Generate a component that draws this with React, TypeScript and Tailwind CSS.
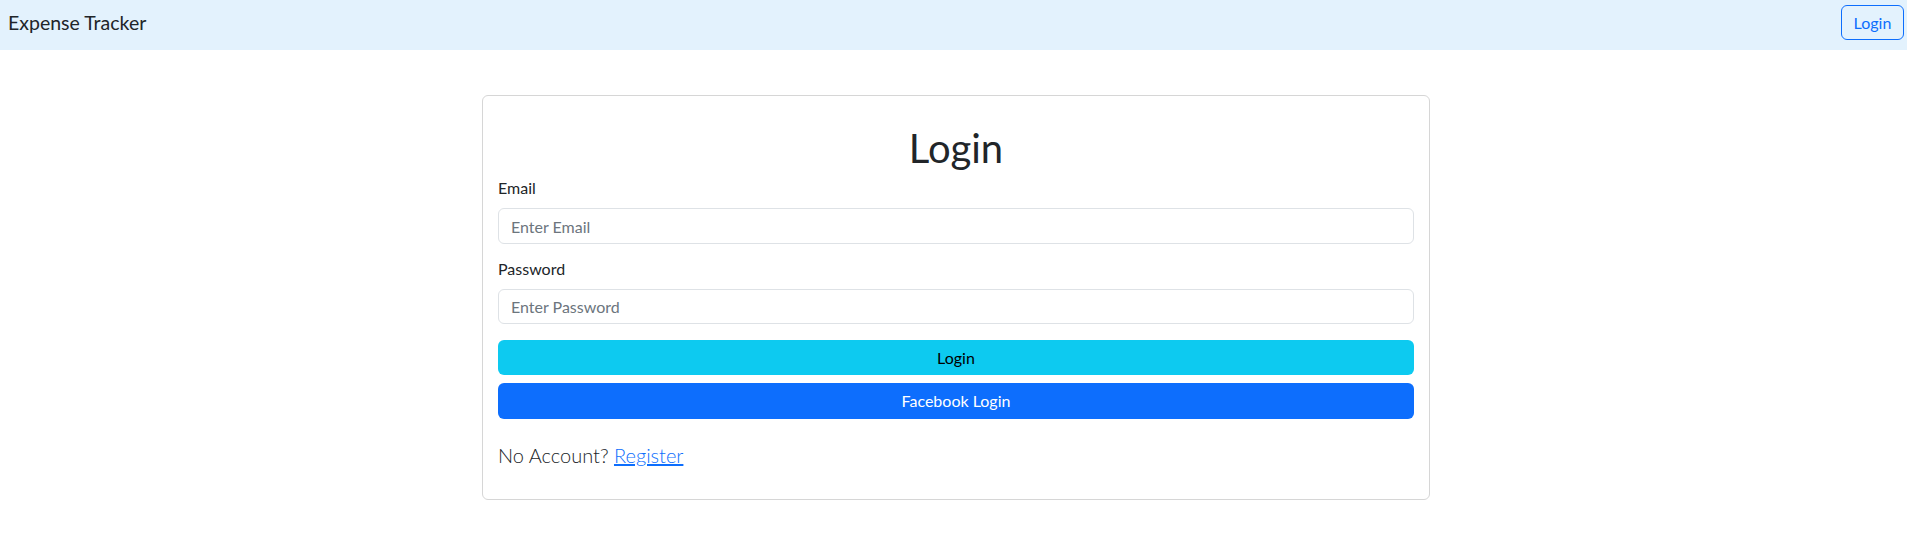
export default function App() {
  return (
    <div className="min-h-screen bg-white text-[#212529] [font-family:Lato,'Liberation_Sans',sans-serif]">
      {/* navbar */}
      <nav className="flex h-[50px] items-start justify-between bg-[#e3f2fd] pl-2 pr-[3px] pt-[5px]">
        <a className="flex h-[35px] items-center text-[19.5px] leading-none text-[#212529]">Expense Tracker</a>
        <button className="h-[35px] w-[63px] rounded-md border border-[#0d6efd] text-[16px] text-[#0d6efd]">
          Login
        </button>
      </nav>

      <div className="pl-[5px]">
        <div className="mx-auto mt-[45px] w-[948px] rounded-md border border-[#d6d6d6] px-[15px] pb-[29px] pt-[28px]">
          <h1 className="text-center text-[40px] leading-[48px] text-[#212529]">Login</h1>

          <form className="mt-[4px] flex flex-col">
            <label className="mb-[8px] text-[16px] leading-6">Email</label>
            <input
              type="email"
              placeholder="Enter Email"
              className="h-[36px] rounded-md border border-[#dee2e6] px-3 text-[16px] placeholder:text-[#6c757d] focus:outline-none"
            />
            <label className="mb-[8px] mt-[13px] text-[16px] leading-6">Password</label>
            <input
              type="password"
              placeholder="Enter Password"
              className="h-[35px] rounded-md border border-[#dee2e6] px-3 text-[16px] placeholder:text-[#6c757d] focus:outline-none"
            />
            <button type="button" className="mt-4 h-[35px] rounded-md bg-[#0dcaf0] text-[16px] text-black">
              Login
            </button>
            <button type="button" className="mt-2 h-[36px] rounded-md bg-[#0d6efd] text-[16px] text-white">
              Facebook Login
            </button>
          </form>

          <p className="mt-[21px] text-[20px] font-light leading-[30px]">
            No Account? <a className="text-[#0d6efd] underline">Register</a>
          </p>
        </div>
      </div>
    </div>
  );
}
